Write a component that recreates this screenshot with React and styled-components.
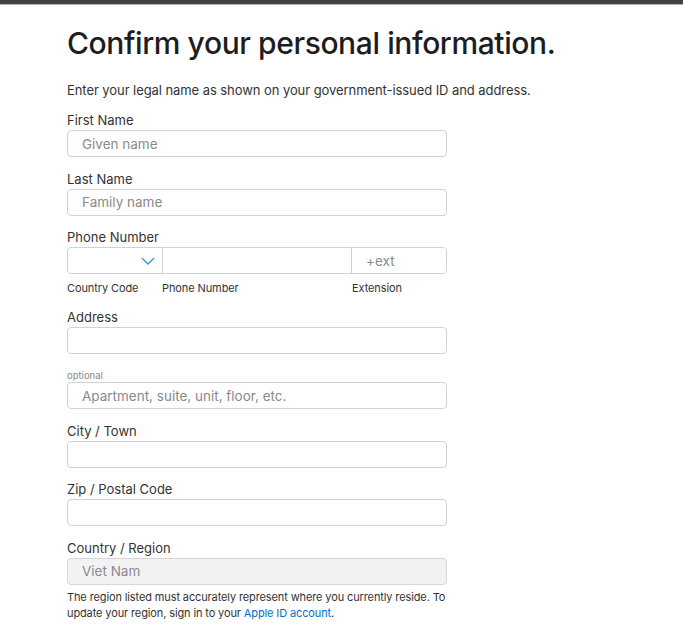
import React from 'react';
import styled, { createGlobalStyle } from 'styled-components';

const GlobalStyle = createGlobalStyle`
	body {
		margin: 0;
		background: #fff;
		font-family: 'Inter', 'Liberation Sans', sans-serif;
		color: #333;
	}
`;

const Field = ({ label, small, children }) => (
	<FieldWrap>
		{small ? <SmallLabel>{label}</SmallLabel> : <Label>{label}</Label>}
		{children}
	</FieldWrap>
);

export default function App() {
	return (
		<>
			<GlobalStyle />
			<TopBar />
			<Page>
				<Title>Confirm your personal information.</Title>
				<Intro>Enter your legal name as shown on your government-issued ID and address.</Intro>
				<Form>
					<Field label='First Name'>
						<Input placeholder='Given name' />
					</Field>
					<Field label='Last Name'>
						<Input placeholder='Family name' />
					</Field>
					<PhoneField>
						<Label>Phone Number</Label>
						<PhoneRow>
							<CodeSelect>
								<svg width='14' height='8' viewBox='0 0 14 8'>
									<polyline points='1,1 7,7 13,1' fill='none' stroke='#2f93d6' strokeWidth='1.3' />
								</svg>
							</CodeSelect>
							<PhoneInput />
							<ExtInput placeholder='+ext' />
						</PhoneRow>
						<SubLabels>
							<SubLabel>Country Code</SubLabel>
							<SubLabel>Phone Number</SubLabel>
							<SubLabel>Extension</SubLabel>
						</SubLabels>
					</PhoneField>
					<Field label='Address'>
						<Input />
					</Field>
					<Field label='optional' small>
						<Input placeholder='Apartment, suite, unit, floor, etc.' />
					</Field>
					<Field label='City / Town'>
						<Input />
					</Field>
					<Field label='Zip / Postal Code'>
						<Input />
					</Field>
					<Field label='Country / Region'>
						<Input disabled placeholder='Viet Nam' />
					</Field>
					<Note>
						The region listed must accurately represent where you currently reside. To update your region, sign in to your{' '}
						<Link href='#'>Apple ID account</Link>.
					</Note>
				</Form>
			</Page>
		</>
	);
}

const TopBar = styled.div`
	height: 4px;
	background: #424242;
	border-bottom: 1px solid #b9a9b0;
`;

const Page = styled.main`
	padding: 0 0 0 67px;
`;

const Title = styled.h1`
	margin: 20px 0 0;
	font-size: 30px;
	line-height: 36px;
	font-weight: 500;
	color: #1d1d1f;
	letter-spacing: -0.4px;
`;

const Intro = styled.p`
	margin: 20px 0 0;
	font-size: 13px;
	line-height: 18px;
	letter-spacing: -0.07px;
	color: #333;
`;

const Form = styled.div`
	width: 380px;
	margin-top: 11px;
	display: flex;
	flex-direction: column;
`;

const FieldWrap = styled.div`
	display: flex;
	flex-direction: column;
	margin-bottom: 11.5px;
`;

const PhoneField = styled(FieldWrap)`
	margin-bottom: 11px;
`;

const Label = styled.label`
	font-size: 13px;
	line-height: 18px;
	color: #333;
	margin: 1px 0 1px;
`;

const SmallLabel = styled.label`
	font-size: 9.5px;
	line-height: 13px;
	color: #888;
	margin: 3.5px 0 0;
`;

const Input = styled.input`
	box-sizing: border-box;
	width: 100%;
	height: 27px;
	padding: 0 14px;
	border: 1px solid #d2d2d2;
	border-radius: 4px;
	background: #fff;
	font-family: inherit;
	font-size: 13.5px;
	color: #333;
	outline: none;

	&::placeholder {
		color: #8a8a8a;
	}

	&:disabled {
		background: #f2f2f2;
		border-color: #d6d6d6;
	}
`;

const PhoneRow = styled.div`
	display: grid;
	grid-template-columns: 95px 1fr 95px;
	height: 27px;
	box-sizing: border-box;
	border: 1px solid #d2d2d2;
	border-radius: 4px;
	overflow: hidden;
`;

const CodeSelect = styled.div`
	display: flex;
	align-items: center;
	justify-content: flex-end;
	padding-right: 7px;
	border-right: 1px solid #d2d2d2;
`;

const PhoneInput = styled.input`
	border: none;
	outline: none;
	padding: 0 14px;
	font-family: inherit;
	font-size: 13.5px;
	min-width: 0;
`;

const ExtInput = styled(PhoneInput)`
	border-left: 1px solid #d2d2d2;

	&::placeholder {
		color: #8a8a8a;
	}
`;

const SubLabels = styled.div`
	display: grid;
	grid-template-columns: 95px 1fr 95px;
	margin-top: 6px;
`;

const SubLabel = styled.span`
	font-size: 11px;
	line-height: 16px;
	letter-spacing: -0.1px;
	color: #333;
`;

const Note = styled.p`
	margin: -7.5px 0 0;
	font-size: 11px;
	line-height: 16px;
	letter-spacing: -0.12px;
	color: #333;
`;

const Link = styled.a`
	color: #0070c9;
	text-decoration: none;
`;
